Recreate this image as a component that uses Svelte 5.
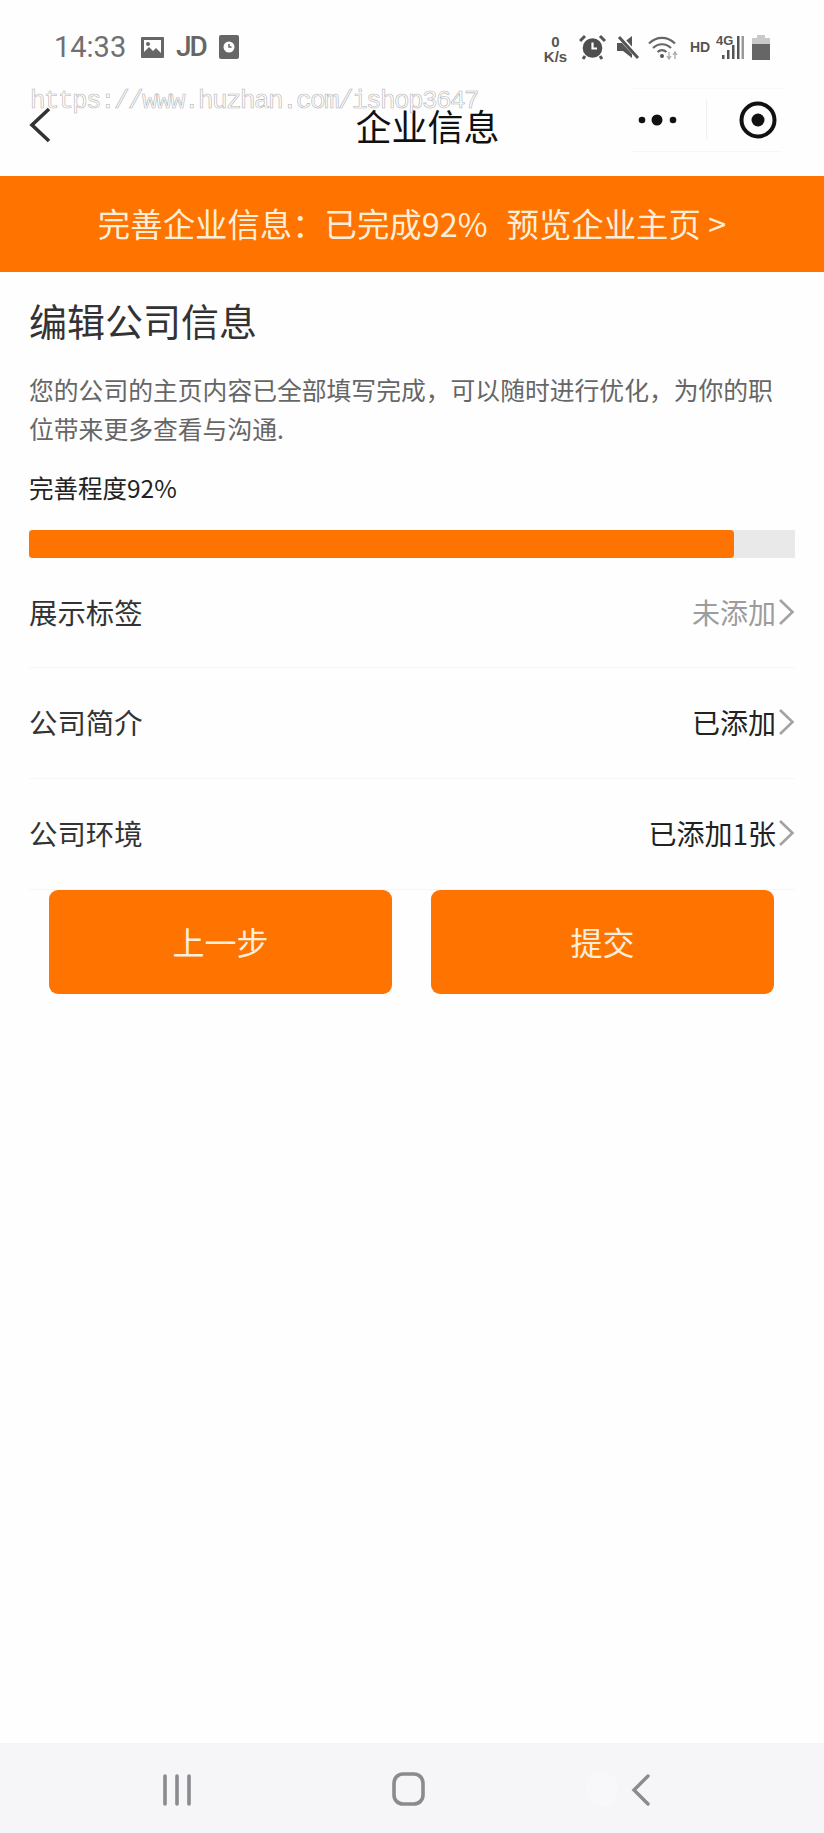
<script>
  const rows = [
    { label: '展示标签', value: '未添加', muted: true },
    { label: '公司简介', value: '已添加', muted: false },
    { label: '公司环境', value: '已添加1张', muted: false }
  ];
</script>

<div class="page">
  <div class="watermark">https://www.huzhan.com/ishop3647</div>

  <div class="status">
    <span class="time">14:33</span>
    <svg class="ic-img" viewBox="0 0 23 23" width="23" height="23">
      <path fill="#666" fill-rule="evenodd" d="M1 1h21a1 1 0 0 1 1 1v19a1 1 0 0 1-1 1H1a1 1 0 0 1-1-1V2a1 1 0 0 1 1-1zM3 4v12l5-5 4 4 3-3 5 5V4z"/>
      <circle cx="7" cy="8" r="2" fill="#666"/>
    </svg>
    <span class="jd">JD</span>
    <svg class="ic-clock" viewBox="0 0 20 24" width="20" height="24">
      <rect width="20" height="24" rx="2" fill="#666"/>
      <circle cx="10" cy="12" r="5.5" fill="#fff"/>
      <path d="M10 9v3h2.6" fill="none" stroke="#666" stroke-width="1.5"/>
    </svg>

    <div class="sys">
      <div class="speed"><span>0</span><span>K/s</span></div>
      <svg class="ic-alarm" viewBox="0 0 27 26" width="27" height="26">
        <circle cx="13.5" cy="14" r="9.8" fill="#4f4f4f"/>
        <path d="M13.5 8.500V14.500H18" fill="none" stroke="#fff" stroke-width="2.200"/>
        <path d="M1 7 6 2M26 7 21 2M6 22l-2 3M21 22l2 3" stroke="#555" stroke-width="3" fill="none"/>
      </svg>
      <svg class="ic-mute" viewBox="0 0 24 24" width="24" height="24">
        <path d="M1 8h6l9-7v22l-9-7H1z" fill="#555"/>
        <path d="M3 1 23 23" stroke="#fff" stroke-width="5"/>
        <path d="M3 2 22 23" stroke="#555" stroke-width="3"/>
      </svg>
      <svg class="ic-wifi" viewBox="0 0 30 25" width="30" height="25">
        <path d="M1 8.500c8-7.500 18-7.500 26 0M5 13c5.500-5 12.500-5 18 0M9.500 17c3-2.500 6-2.500 9 0" fill="none" stroke="#666" stroke-width="2.200"/>
        <circle cx="14" cy="21" r="2" fill="#555"/>
        <path d="M21 17v6M19 21l2 3 2-3" fill="none" stroke="#aaa" stroke-width="1.300"/>
        <path d="M27 24v-6M25 20l2-3 2 3" fill="none" stroke="#aaa" stroke-width="1.300"/>
      </svg>
      <span class="hd">HD</span>
      <div class="net">
        <span class="g4">4G</span>
        <svg viewBox="0 0 22 25" width="22" height="25">
          <rect x="0" y="20" width="2.500" height="4" fill="#555"/>
          <rect x="5" y="15" width="2.500" height="9" fill="#555"/>
          <rect x="10" y="10" width="2.500" height="14" fill="#555"/>
          <rect x="15" y="1" width="2.500" height="23" fill="#555"/>
          <rect x="19.500" y="1" width="2.500" height="23" fill="#999"/>
        </svg>
      </div>
      <svg class="ic-batt" viewBox="0 0 18 25" width="18" height="25">
        <path d="M5 0h8v3h5v22H0V3h5z" fill="#c9c9c9"/>
        <rect y="9" width="18" height="16" fill="#666"/>
      </svg>
    </div>
  </div>

  <header class="nav">
    <svg class="back" viewBox="0 0 24 36" width="24" height="36">
      <path d="M21 2 4 18l17 16" fill="none" stroke="#333" stroke-width="3.600"/>
    </svg>
    <h1>企业信息</h1>
    <div class="capsule">
      <svg class="dots" viewBox="0 0 40 14" width="40" height="14">
        <circle cx="4" cy="7" r="3.300" fill="#111"/>
        <circle cx="19" cy="7" r="5.500" fill="#111"/>
        <circle cx="35" cy="7" r="3.300" fill="#111"/>
      </svg>
      <span class="sep"></span>
      <svg class="target" viewBox="0 0 38 38" width="38" height="38">
        <circle cx="19" cy="19" r="16.500" fill="none" stroke="#111" stroke-width="4"/>
        <circle cx="19" cy="19" r="6.500" fill="#111"/>
      </svg>
    </div>
  </header>

  <div class="banner">
    <span>完善企业信息：已完成92%</span><span class="preview">预览企业主页 &gt;</span>
  </div>

  <main class="content">
    <h2>编辑公司信息</h2>
    <p class="desc">您的公司的主页内容已全部填写完成，可以随时进行优化，为你的职位带来更多查看与沟通.</p>
    <div class="plabel">完善程度92%</div>
    <div class="track"><div class="fill" style="width: 92%"></div></div>

    <div class="rows">
      {#each rows as r}
        <div class="row">
          <span class="rl">{r.label}</span>
          <span class="rv" class:muted={r.muted}>{r.value}</span>
          <svg class="chev" viewBox="0 0 17 28" width="17" height="28">
            <path d="M2 2 14.500 14 2 26" fill="none" stroke="#a3a3a3" stroke-width="2.600"/>
          </svg>
        </div>
      {/each}
    </div>
  </main>

  <div class="actions">
    <button>上一步</button>
    <button>提交</button>
  </div>

  <div class="spacer"></div>

  <footer class="softkeys">
    <svg viewBox="0 0 30 32" width="30" height="32" class="k1">
      <path d="M3 2v28M15 2v28M27 2v28" stroke="#8b8b8f" stroke-width="3.600" stroke-linecap="round"/>
    </svg>
    <svg viewBox="0 0 33 34" width="33" height="34" class="k2">
      <rect x="2" y="2" width="29" height="30" rx="9" fill="none" stroke="#8b8b8f" stroke-width="3.600"/>
    </svg>
    <svg viewBox="0 0 20 32" width="20" height="32" class="k3">
      <path d="M17 2 3 16l14 14" fill="none" stroke="#8b8b8f" stroke-width="3.400" stroke-linecap="round"/>
    </svg>
    <span class="blob"></span>
  </footer>
</div>

<style>
  :global(body) {
    margin: 0;
    background: #fff;
  }
  .page {
    position: relative;
    width: 824px;
    height: 1833px;
    display: flex;
    flex-direction: column;
    overflow: hidden;
    background: #fefefe;
    font-family: "Noto Sans CJK SC", "Noto Sans", sans-serif;
  }
  .watermark {
    position: absolute;
    left: 30px;
    top: 85px;
    z-index: 3;
    font-family: "Liberation Mono", monospace;
    font-size: 26px;
    letter-spacing: -1.6px;
    line-height: 32px;
    color: rgba(255, 255, 255, 0.75);
    -webkit-text-stroke: 0.6px #b4b4b4;
  }
  .status {
    height: 88px;
    flex: none;
    display: flex;
    align-items: center;
    padding: 6px 54px 0 54px;
    box-sizing: border-box;
    color: #666;
  }
  .time {
    font-family: Roboto, sans-serif;
    font-size: 29px;
    line-height: 34px;
    width: 87px;
    color: #707070;
  }
  .ic-img { margin-right: 12px; }
  .jd {
    font-family: Roboto, sans-serif;
    font-weight: 500;
    font-size: 28px;
    line-height: 34px;
    width: 43px;
    letter-spacing: -2px;
  }
  .sys {
    margin-left: auto;
    display: flex;
    align-items: center;
    color: #555;
  }
  .speed {
    display: flex;
    flex-direction: column;
    align-items: center;
    font: 700 15px/15px "Liberation Sans", sans-serif;
    width: 25px;
    margin-right: 11px;
    padding-top: 4px;
  }
  .ic-alarm { margin-right: 10px; }
  .ic-mute { margin-right: 8px; }
  .ic-wifi { margin-right: 12px; }
  .hd {
    font: 700 14px/16px "Liberation Sans", sans-serif;
    width: 26px;
  }
  .net {
    position: relative;
    width: 28px;
    height: 25px;
    margin-right: 8px;
    display: flex;
    justify-content: flex-end;
  }
  .g4 {
    position: absolute;
    left: 0;
    top: -1px;
    font: 700 13px/13px "Liberation Sans", sans-serif;
  }
  .nav {
    height: 88px;
    flex: none;
    position: relative;
    display: flex;
    align-items: center;
    justify-content: center;
    box-sizing: border-box;
    padding: 0 0 14px 31px;
  }
  .back {
    position: absolute;
    left: 28px;
    top: 19px;
  }
  h1 {
    margin: 0;
    font-size: 36px;
    font-weight: 400;
    line-height: 50px;
    color: #111;
  }
  .capsule {
    position: absolute;
    left: 632px;
    top: 0;
    width: 150px;
    height: 64px;
    box-sizing: border-box;
    border-top: 1px solid #f8f8f8;
    border-bottom: 1px solid #f7f7f7;
  }
  .dots {
    position: absolute;
    left: 6px;
    top: 24px;
  }
  .sep {
    position: absolute;
    left: 74px;
    top: 10px;
    width: 1px;
    height: 40px;
    background: #f0f0f0;
  }
  .target {
    position: absolute;
    left: 107px;
    top: 12px;
  }
  .banner {
    height: 96px;
    flex: none;
    background: #ff7300;
    color: #fdeeda;
    display: flex;
    align-items: center;
    justify-content: center;
    gap: 19px;
    font-size: 32.400px;
    line-height: 44px;
    box-sizing: border-box;
    padding-bottom: 2px;
  }
  .content {
    padding: 0 29px;
    flex: none;
  }
  h2 {
    margin: 23px 0 0;
    font-size: 38px;
    font-weight: 400;
    line-height: 50px;
    color: #333;
  }
  .desc {
    margin: 25px 0 0;
    font-size: 24.800px;
    line-height: 39px;
    color: #666;
  }
  .plabel {
    margin-top: 22px;
    font-size: 24.500px;
    line-height: 36px;
    color: #222;
  }
  .track {
    margin-top: 24px;
    height: 28px;
    background: #e9e9e9;
  }
  .fill {
    height: 100%;
    background: #ff7300;
    border-radius: 4px;
  }
  .row {
    height: 111px;
    box-sizing: border-box;
    border-bottom: 1px solid #f6f6f6;
    display: flex;
    align-items: center;
    padding-bottom: 3px;
  }
  .rows .row:first-child {
    height: 110px;
    padding-bottom: 2px;
  }
  .rl {
    font-size: 28.400px;
    line-height: 40px;
    color: #333;
    margin-right: auto;
  }
  .rv {
    font-size: 28px;
    line-height: 40px;
    color: #222;
  }
  .rv.muted { color: #9c9c9c; }
  .chev { margin-left: 2px; }
  .actions {
    display: flex;
    justify-content: space-between;
    padding: 0 50px 0 49px;
    flex: none;
  }
  button {
    width: 343px;
    height: 104px;
    border: 0;
    border-radius: 9px;
    background: #ff7300;
    color: #fdeeda;
    font: 400 32px/44px "Noto Sans CJK SC", sans-serif;
    padding: 0 0 3px;
  }
  .spacer { flex: 1; }
  .softkeys {
    height: 90px;
    flex: none;
    background: #f6f5f8;
    position: relative;
  }
  .softkeys svg { position: absolute; }
  .k1 { left: 162px; top: 31px; }
  .k2 { left: 392px; top: 29px; }
  .k3 { left: 631px; top: 31px; }
  .blob {
    position: absolute;
    left: 586px;
    top: 28px;
    width: 32px;
    height: 36px;
    border-radius: 50%;
    background: #f8f7f9;
  }
</style>
